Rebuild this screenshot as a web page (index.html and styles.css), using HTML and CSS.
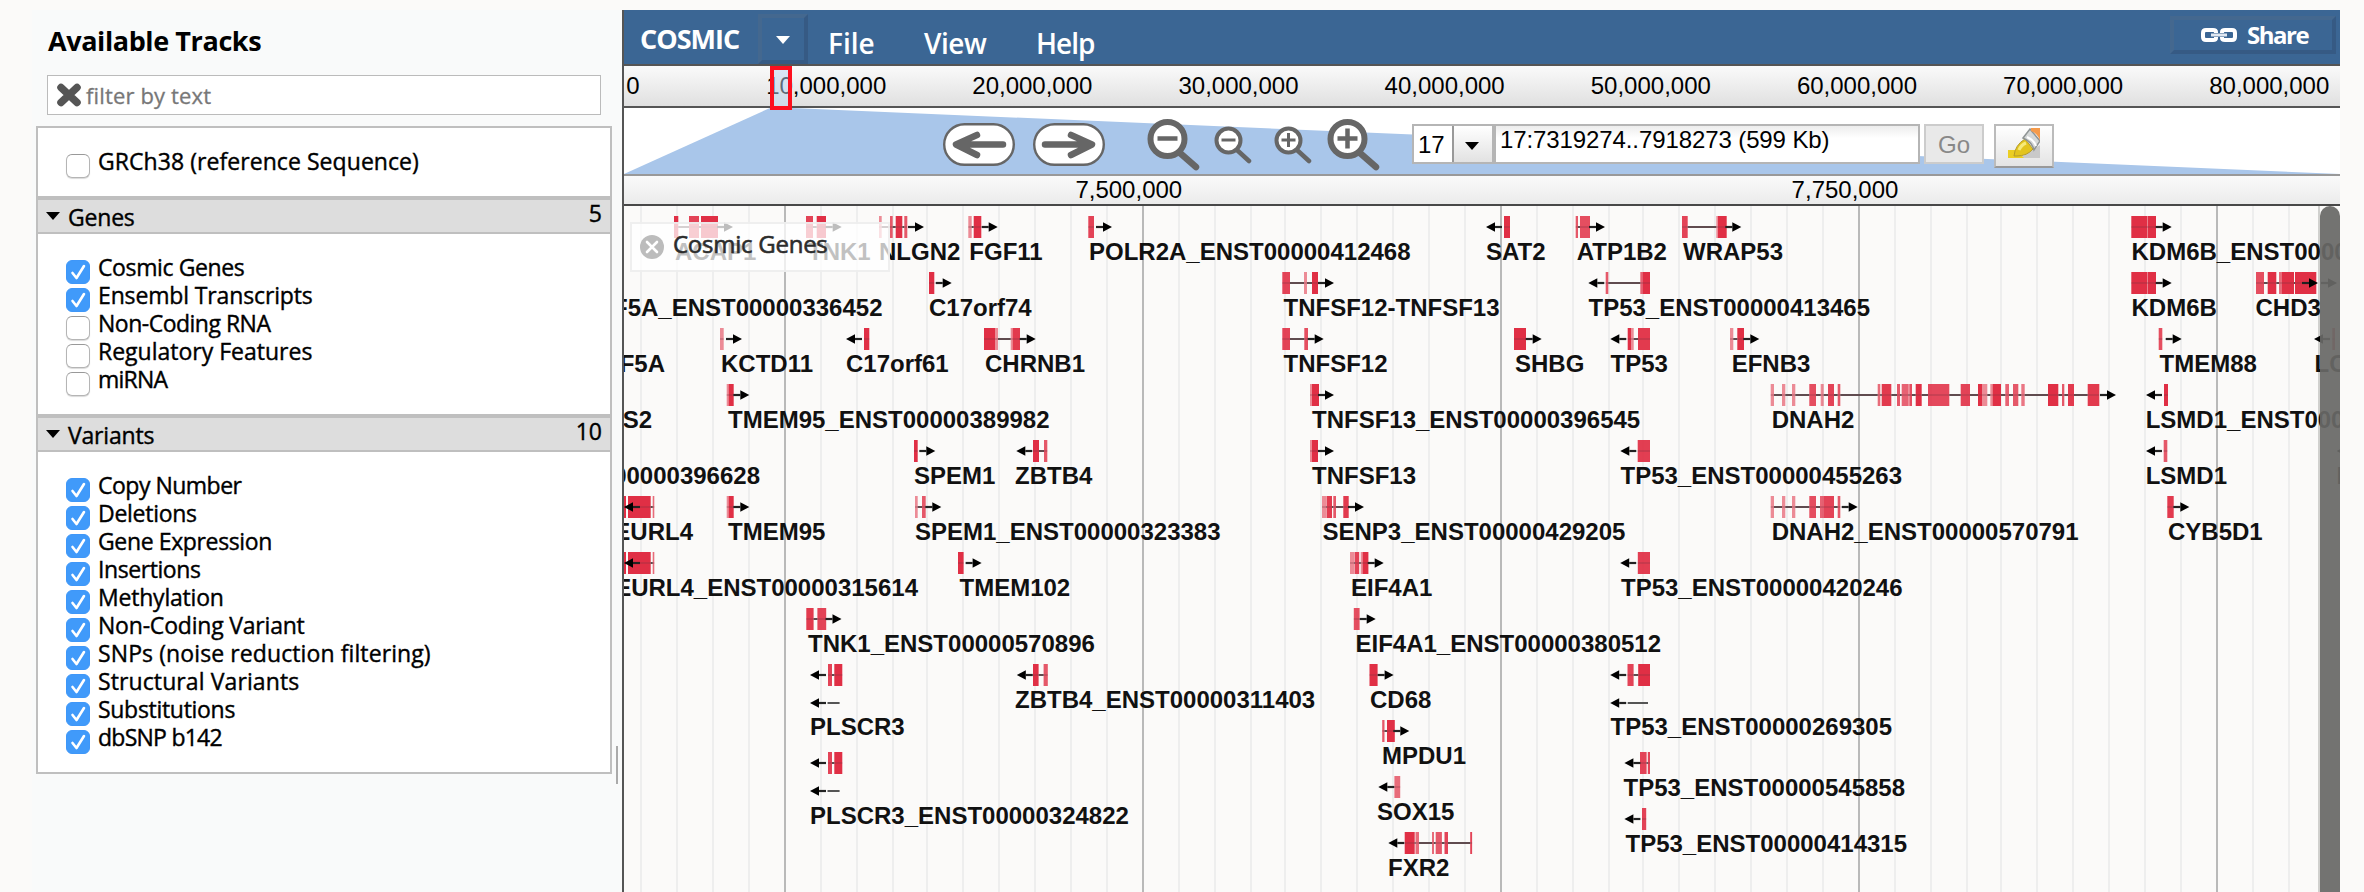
FILE: index.html
```html
<!DOCTYPE html>
<html lang="en">
<head>
<meta charset="utf-8">
<title>COSMIC Genome Browser</title>
<link rel="stylesheet" href="styles.css">
</head>
<body>
<div class="app">
  <aside class="sidebar">
    <h1 class="sidebar-title"><span>Available Tracks</span></h1>
    <div class="filter">
      <svg class="filter-clear" width="26" height="24" viewBox="0 0 26 24"><path d="M5 4.500L21 19.500M21 4.500L5 19.500" stroke="#555" stroke-width="7.500" stroke-linecap="round"/></svg>
      <span class="filter-hint">filter by text</span>
    </div>
    <div class="groups" id="groups"></div>
  </aside>
  <div class="splitter"><i class="grip"></i></div>
  <main class="browser">
    <nav class="menubar">
      <span class="brand">COSMIC</span>
      <span class="brand-drop"><i class="tri tri-light"></i></span>
      <span class="menu menu-file">File</span>
      <span class="menu menu-view">View</span>
      <span class="menu menu-help">Help</span>
      <span class="share">
        <svg width="38" height="16" viewBox="0 0 38 16"><g fill="none" stroke="#fff" stroke-width="4"><path d="M16 6V5Q16 3 13 3H6Q3 3 3 6V10Q3 13 6 13H13Q16 13 16 11V10"/><path d="M22 6V5Q22 3 25 3H32Q35 3 35 6V10Q35 13 32 13H25Q22 13 22 11V10"/></g><path d="M11 8H27" stroke="#dfe7f1" stroke-width="3"/></svg>
        <span class="share-text">Share</span>
      </span>
    </nav>
    <svg class="overview" id="overview" width="1716" height="40" viewBox="624 66 1716 40"></svg>
    <div class="navbox">
      <svg class="navshade" width="1716" height="66" viewBox="624 108 1716 66"><path d="M624 174L770 108H792L2340 174Z" fill="#a9c6ea"/></svg>
      <svg class="pan pan-left" width="72" height="43" viewBox="0 0 72 43"><rect x="1.200" y="1.200" width="69.600" height="40.600" rx="20.300" fill="#fff" stroke="#666" stroke-width="2.400"/><path d="M60 21.500H14M34 12L13 21.500L34 32" fill="none" stroke="#666" stroke-width="6.500" stroke-linecap="round" stroke-linejoin="round"/></svg>
      <svg class="pan pan-right" width="72" height="43" viewBox="0 0 72 43"><rect x="1.200" y="1.200" width="69.600" height="40.600" rx="20.300" fill="#fff" stroke="#666" stroke-width="2.400"/><path d="M12 21.500H58M38 12L59 21.500L38 32" fill="none" stroke="#666" stroke-width="6.500" stroke-linecap="round" stroke-linejoin="round"/></svg>
      <svg class="zoom-out-big" width="54" height="52" viewBox="0 0 54 52"><path d="M33 34L49 48" stroke="#666" stroke-width="6.500" stroke-linecap="round"/><circle cx="20.500" cy="20" r="17" fill="#fff" stroke="#666" stroke-width="6"/><path d="M10.500 19.500H30.500" stroke="#666" stroke-width="4.500"/></svg>
      <svg class="zoom-out" width="38" height="38" viewBox="0 0 38 38"><path d="M23 24L35 35" stroke="#666" stroke-width="4.500" stroke-linecap="round"/><circle cx="14.500" cy="14.500" r="12" fill="#fff" stroke="#666" stroke-width="4"/><path d="M7.500 14H21.500" stroke="#666" stroke-width="3"/></svg>
      <svg class="zoom-in" width="38" height="38" viewBox="0 0 38 38"><path d="M23 24L35 35" stroke="#666" stroke-width="4.500" stroke-linecap="round"/><circle cx="14.500" cy="14.500" r="12" fill="#fff" stroke="#666" stroke-width="4"/><path d="M7.500 14H21.500M14.500 7V21" stroke="#666" stroke-width="3"/></svg>
      <svg class="zoom-in-big" width="54" height="52" viewBox="0 0 54 52"><path d="M33 34L49 48" stroke="#666" stroke-width="6.500" stroke-linecap="round"/><circle cx="20.500" cy="20" r="17" fill="#fff" stroke="#666" stroke-width="6"/><path d="M10.500 19.500H30.500M20.500 9.500V29.500" stroke="#666" stroke-width="4.500"/></svg>
      <div class="chrom"><span class="chrom-value">17</span><span class="chrom-drop"><i class="tri"></i></span></div>
      <div class="location">17:7319274..7918273 (599 Kb)</div>
      <div class="go">Go</div>
      <div class="highlight">
        <svg width="32" height="30" viewBox="0 0 32 30">
          <path d="M12 30L32 17V30Z" fill="#c9c9c9"/>
          <path d="M0 22H8L16 30H0Z" fill="#ebce22"/>
          <path d="M6 28Q7 17 17 11L25 21Q19 28 9 28Z" fill="#e3c41d" stroke="#b39a28" stroke-width="1"/>
          <path d="M11 22Q13 17 18 15" stroke="#f7ea7a" stroke-width="3" fill="none"/>
          <path d="M15 10L22 1L32 13L26 22Q24 14 15 10Z" fill="#d5d8d8" stroke="#8f9494" stroke-width="1.500"/>
          <path d="M19 9Q26 12 28 18" stroke="#fff" stroke-width="2" fill="none"/>
          <path d="M23 0H32V12Q29 5 23 3Z" fill="#f59a4a"/>
        </svg>
      </div>
    </div>
    <svg class="ruler" id="ruler" width="1716" height="28" viewBox="624 176 1716 28"></svg>
    <div class="viewport">
      <svg class="tracks" id="tracks" width="1716" height="686" viewBox="624 206 1716 686"></svg>
      <div class="track-label">
        <svg width="24" height="24" viewBox="0 0 24 24"><circle cx="12" cy="12" r="12" fill="#bcbcbc"/><path d="M7 7L17 17M17 7L7 17" stroke="#fff" stroke-width="2.600" stroke-linecap="round"/></svg>
        <span class="track-label-text">Cosmic Genes</span>
      </div>
      <div class="scrollbar"></div>
    </div>
    <svg class="marker" width="22" height="44" viewBox="0 0 22 44"><rect x="2" y="2" width="18" height="40" fill="#bcd5f0" fill-opacity=".5" stroke="#fd0f1e" stroke-width="4"/></svg>
  </main>
</div>
<script src="app.js"></script>
</body>
</html>
```
FILE: styles.css
```css
* { box-sizing: border-box; }
body { margin: 0; width: 2364px; height: 892px; overflow: hidden; background: #fbfaf9; color: #000; font-family: "Open Sans", "Noto Sans", sans-serif; }
svg { display: block; flex: none; }
.app { display: flex; height: 892px; padding: 10px 24px 0 32px; }

.sidebar { width: 580px; padding: 13px 0 0 4px; background: #f9fafa; }
.sidebar-title { margin: 0 0 16px 12px; font-size: 27px; line-height: 36px; font-weight: 700; letter-spacing: -0.4px; }
.filter { display: flex; align-items: center; width: 554px; height: 40px; margin-left: 11px; padding-left: 8px; border: 1px solid #bbb; background: #fff; }
.filter-hint { margin-left: 4px; color: #777; font-size: 22px; line-height: 38px; letter-spacing: 0.15px; -webkit-text-stroke: 0.3px #777; }
.groups { width: 576px; margin-top: 11px; -webkit-text-stroke: 0.4px #000; }
.group { border: 2px solid #bfbfbf; background: #fff; }
.group-head { display: flex; height: 34px; padding: 1px 8px 0 8px; border-bottom: 2px solid #bfbfbf; background: #ddd; font-size: 23px; line-height: 32px; }
.group-head .tri { margin: 11px 8px 0 0; }
.group-name { flex: 1; letter-spacing: -0.2px; }
.group-count { line-height: 24px; }
.group-body { padding: 19px 0 21px 28px; }
.row { display: flex; height: 28px; font-size: 23px; line-height: 28px; }
.check { width: 24px; height: 24px; margin: 7px 8px 0 0; border: 1px solid #b5b5b5; border-top-color: #999; border-radius: 6px; background: #fff; box-shadow: 0 1px 1px rgba(0,0,0,.15); }
.check-on { border-color: #3f97f8; background: #409afa; box-shadow: none; }
.check-on svg { margin: -1px; }
.tri { display: block; width: 0; height: 0; border: 7px solid transparent; border-top: 8px solid #000; border-bottom: 0; }
.tri-light { border-top-color: #fff; }

.splitter { display: flex; flex-direction: column; width: 10px; padding: 736px 0 0 4px; background: #f9fafa; }
.grip { width: 2px; height: 38px; background: #aaa; }

.browser { position: relative; width: 1718px; border-left: 2px solid #555; }
.menubar { display: flex; height: 56px; border-bottom: 2px solid #555; background: #3b6694; color: #fff; line-height: 54px; }
.brand { width: 118px; margin-left: 16px; padding-top: 2px; font-size: 27px; font-weight: 700; letter-spacing: -1px; }
.brand-drop { width: 50px; height: 50px; margin: 4px 20px 0 0; padding: 18px 0 0 14px; border: 4px solid; border-color: #44688f #365a84 #365a84 #44688f; }
.menu { padding-top: 6px; font-size: 28px; font-weight: 600; letter-spacing: -1px; }
.menu-file { width: 96px; letter-spacing: 0; }
.menu-view { width: 112px; letter-spacing: -0.5px; }
.share { display: flex; align-items: center; width: 166px; height: 38px; margin: 6px 4px 0 auto; padding-left: 26px; border: 4px solid; border-color: #44688f #365a84 #365a84 #44688f; }
.share-text { margin-left: 9px; font-size: 24px; font-weight: 700; line-height: 30px; letter-spacing: -1.5px; }
.overview { height: 40px; background: linear-gradient(#fafafa, #e0e0e0); }
.marker { position: absolute; left: 146px; top: 56px; }
.axis { font-family: "Liberation Sans", Arial, sans-serif; font-size: 24px; }

.navbox { position: relative; display: flex; height: 70px; border-top: 2px solid #555; border-bottom: 2px solid #999; background: #fff; font-family: "Liberation Sans", Arial, sans-serif; font-size: 24px; }
.navshade { position: absolute; left: 0; top: 0; }
.navbox > * { z-index: 1; }
.navbox > .navshade { z-index: 0; }
.pan { margin-top: 15px; }
.pan-left { margin-left: 319px; }
.pan-right { margin-left: 18px; }
.zoom-out-big { margin: 11px 0 0 42px; }
.zoom-out { margin: 18px 0 0 13px; }
.zoom-in { margin: 18px 0 0 22px; }
.zoom-in-big { margin: 11px 0 0 15px; }
.chrom { display: flex; width: 82px; height: 40px; margin: 16px 0 0 31px; border: 2px solid #b5b5b5; background: #fff; }
.chrom-value { width: 38px; padding-left: 4px; line-height: 38px; }
.chrom-drop { flex: 1; padding: 16px 0 0 11px; border-left: 2px solid #999; background: linear-gradient(#fff, #e2e2e2); }
.location { width: 426px; height: 40px; margin-top: 16px; padding-left: 4px; border: 2px solid #b5b5b5; background: linear-gradient(#ededed, #fff 12px); line-height: 28px; letter-spacing: -0.1px; white-space: nowrap; }
.go { width: 60px; height: 40px; margin: 16px 0 0 4px; border: 2px solid #ccc; background: #e9e9e9; color: #888; line-height: 38px; text-align: center; }
.highlight { width: 60px; height: 44px; margin: 16px 0 0 10px; padding: 2px 0 0 12px; border: 2px solid #bbb; border-bottom-color: #999; background: linear-gradient(#fff, #e4e4e4); }

.ruler { background: linear-gradient(#fafafa, #ebebeb); }
.viewport { position: relative; height: 688px; border-top: 2px solid #484848; }
.gene { font-family: "Liberation Sans", Arial, sans-serif; font-size: 24px; font-weight: 700; fill: #111; }
.track-label { position: absolute; left: 6px; top: 16px; display: flex; align-items: center; width: 260px; height: 50px; padding-left: 8px; border: 2px solid rgba(235,235,235,.8); background: rgba(255,255,255,.74); }
.track-label-text { margin: -6px 0 0 9px; color: #2c2c2c; font-size: 24px; line-height: 30px; letter-spacing: -0.25px; -webkit-text-stroke: 0.6px #2c2c2c; }
.scrollbar { position: absolute; right: 0; top: 0; width: 20px; height: 686px; border-radius: 10px 10px 0 0; background: rgba(104,104,102,.93); }
```
FILE: app.js
```js
// Track groups: label, checked state, tracking in px
const groups = [
  { items: [['GRCh38 (reference Sequence)', 0, 0.06]] },
  { name: 'Genes', count: 5, items: [['Cosmic Genes', 1, -0.38], ['Ensembl Transcripts', 1, -0.14], ['Non-Coding RNA', 0, -0.5], ['Regulatory Features', 0, 0], ['miRNA', 0, -0.8]] },
  { name: 'Variants', count: 10, items: [['Copy Number', 1, -0.5], ['Deletions', 1, -0.27], ['Gene Expression', 1, -0.37], ['Insertions', 1, -0.42], ['Methylation', 1, -0.2], ['Non-Coding Variant', 1, -0.2], ['SNPs (noise reduction filtering)', 1, 0.1], ['Structural Variants', 1, 0.1], ['Substitutions', 1, -0.3], ['dbSNP b142', 1, -0.75]] }
];
const tick = '<svg width="24" height="24" viewBox="0 0 24 24"><path d="M6.500 13L10.500 18L18 6" fill="none" stroke="#fff" stroke-width="2.600" stroke-linecap="round" stroke-linejoin="round"/></svg>';
document.getElementById('groups').innerHTML = groups.map(g =>
  '<section class="group">' +
  (g.name ? `<header class="group-head"><i class="tri"></i><span class="group-name">${g.name}</span><span class="group-count">${g.count}</span></header>` : '') +
  '<div class="group-body">' + g.items.map(([t, on, ls]) =>
    `<div class="row"><span class="check${on ? ' check-on' : ''}">${on ? tick : ''}</span><span class="row-text" style="letter-spacing:${ls}px">${t}</span></div>`).join('') +
  '</div></section>').join('');

// Chromosome overview scale
let out = '<text class="axis" x="633" y="94" text-anchor="middle">0</text>';
for (let i = 1; i <= 8; i++) out += `<text class="axis" x="${826.2 + (i - 1) * 206.15}" y="94" text-anchor="middle">${i}0,000,000</text>`;
document.getElementById('overview').innerHTML = out;
document.getElementById('ruler').innerHTML =
  '<text class="axis" x="1128.800" y="198" text-anchor="middle">7,500,000</text><text class="axis" x="1845" y="198" text-anchor="middle">7,750,000</text>';

// Each gene: name, row, label x (negative = right edge), direction, arrow tip x, exons [start, end, opacity]
const P = 0.55;
const dnahHead = [[1770.7,1774,P],[1782,1785.3,P],[1792,1795.3,P],[1809.3,1816,.85]];
const neurl = [[624,626],[628,650.7],[652.7,654.3,.7]];
const kdm = [[2131.3,2147.3],[2147.3,2148,.6],[2148,2156]];
const genes = [
  ['ACAP1',0,675,1,733,[[674,678.3],[689,699,.9],[701,718]]],
  ['TNK1',0,808,1,841.7,[[806,813,.9],[816.7,826]]],
  ['NLGN2',0,879,1,924,[[879,881.7,P],[890,892.7,.8],[895.7,902.3],[904.3,907.3,.8]]],
  ['FGF11',0,969.3,1,997.7,[[968.3,971.7,P],[973.7,981.3]]],
  ['POLR2A_ENST00000412468',0,1089,1,1112,[[1088.3,1094,.9]]],
  ['SAT2',0,1486,-1,1486,[[1504,1510]]],
  ['ATP1B2',0,1576.7,1,1605,[[1575.7,1578,.8],[1580,1590,.85]]],
  ['WRAP53',0,1683,1,1741.3,[[1682,1687.7,.9],[1716.3,1718,P],[1718,1726.7]]],
  ['KDM6B_ENST00000254846',0,2131.5,1,2171.7,kdm],
  ['EIF5A_ENST00000336452',1,-882.5,0,0,[]],
  ['C17orf74',1,929,1,951.7,[[929,934.3]]],
  ['TNFSF12-TNFSF13',1,1283.5,1,1334,[[1282.3,1290,.9],[1304,1307,P],[1312,1318]]],
  ['TP53_ENST00000413465',1,1588.5,-1,1588.3,[[1605.7,1608.3,.8],[1640.3,1643,.75],[1643,1650]]],
  ['KDM6B',1,2131.5,1,2171.7,kdm],
  ['CHD3',1,2255.5,1,2318,[[2256,2264,.85],[2267.7,2276.3],[2279,2282,.7],[2282,2294],[2295,2316.3]]],
  ['EIF5A',2,-665,0,0,[]],
  ['KCTD11',2,721,1,742,[[720,723.7,P]]],
  ['C17orf61',2,846,-1,846,[[864,869.3]]],
  ['CHRNB1',2,985,1,1035.7,[[984,995],[995,998,P],[1010.7,1012.5,P],[1012.5,1020,.95]]],
  ['TNFSF12',2,1283.5,1,1323.7,[[1282.3,1290,.9],[1304.3,1308,.85]]],
  ['SHBG',2,1515,1,1541.7,[[1514,1526]]],
  ['TP53',2,1610.5,-1,1610.3,[[1627.7,1631],[1631,1633.7,P],[1638,1650,.95]]],
  ['EFNB3',2,1731.7,1,1759.3,[[1730,1733.3,P],[1737.3,1744]]],
  ['TMEM88',2,2159.5,1,2181.7,[[2158.7,2162.3,.85]]],
  ['LCE',2,2314.6,-1,2314,[[2332.3,2335,.8]]],
  ['SLC2A4_S2',3,-652,0,0,[]],
  ['TMEM95_ENST00000389982',3,728,1,749.3,[[726.7,728.5,P],[728.5,733.7]]],
  ['TNFSF13_ENST00000396545',3,1312,1,1334,[[1310,1312,P],[1312,1319]]],
  ['DNAH2',3,1771.7,1,2116,[...dnahHead,[1820.7,1823.7,P],[1828,1834,.9],[1837.7,1840.3,.8],[1877.7,1880.3,.7],[1881.7,1891.3,.95],[1897,1900,.8],[1901.7,1908.7,.75],[1909.3,1912,.85],[1915.7,1921.7],[1928,1949.3,.88],[1960.7,1970,.9],[1978,1982],[1982,1987.3,P],[1990.3,1992.5,P],[1992.5,2001],[2005.3,2009,.75],[2013,2018.3,.8],[2021.3,2024.7,.65],[2048,2058.3],[2062,2064.3,.8],[2068,2074,.95],[2087.7,2099.3,.95]]],
  ['LSMD1_ENST00000330767',3,2145.7,-1,2146,[[2164,2168]]],
  ['EIF5A_ENST00000396628',4,-760,0,0,[]],
  ['SPEM1',4,914,1,935.3,[[914,917.7]]],
  ['ZBTB4',4,1015,-1,1016.3,[[1033,1039],[1044,1047.3,.8]]],
  ['TNFSF13',4,1312,1,1334,[[1310,1312,P],[1312,1318]]],
  ['TP53_ENST00000455263',4,1620.5,-1,1620.3,[[1637.7,1650,.93]]],
  ['LSMD1',4,2145.7,-1,2146,[[2163.7,2167.3,.8]]],
  ['D',4,2336.5,-1,2336.7,[]],
  ['NEURL4',5,-693,-1,624,neurl],
  ['TMEM95',5,728,1,749.3,[[726.7,728.5,P],[728.5,733.7]]],
  ['SPEM1_ENST00000323383',5,915,1,941.3,[[915,917.7,P],[922,925.7,.8]]],
  ['SENP3_ENST00000429205',5,1322.5,1,1364,[[1322,1326,P],[1326.5,1332,.95],[1333.3,1336,.8],[1343.3,1348.7,.95]]],
  ['DNAH2_ENST00000570791',5,1771.7,1,1857.7,[...dnahHead,[1820,1824,.75],[1824,1834,.9],[1837.7,1840.3,.8]]],
  ['CYB5D1',5,2168,1,2189.3,[[2167.3,2173.7,.95]]],
  ['NEURL4_ENST00000315614',6,-918,-1,624,neurl],
  ['TMEM102',6,959.5,1,981.6,[[958,963.6]]],
  ['EIF4A1',6,1351,1,1383.7,[[1350,1354,P],[1354.5,1359.2,.9],[1360.7,1362.5,P],[1362.5,1368.4]]],
  ['TP53_ENST00000420246',6,1621,-1,1620.2,[[1637.8,1650,.93]]],
  ['TNK1_ENST00000570896',7,808,1,841.5,[[806.3,813.6,.95],[817.4,826.2,.9]]],
  ['EIF4A1_ENST00000380512',7,1355.5,1,1375.7,[[1353.8,1359.6,.85]]],
  ['PLSCR3',8,810,-1,810,[[828,832,.9],[834.3,842.3]],735,839.6],
  ['PLSCR3_ENST00000324822',9.5714,810,-1,810,[[828,832,.9],[834.3,842.3]],823.5,839.6],
  ['ZBTB4_ENST00000311403',8,1015,-1,1016.8,[[1033,1038.6],[1043.6,1047.8,.8]]],
  ['CD68',8,1370,1,1393.6,[[1369.5,1377.6]]],
  ['MPDU1',9,1382,1,1409.3,[[1382.2,1384.5,.8],[1387,1394.8]]],
  ['SOX15',10,1377,-1,1378.3,[[1394.4,1400.2,.7]]],
  ['FXR2',11,1388,-1,1388.3,[[1404.7,1414.7],[1415.5,1419,.7],[1432,1434,.7],[1435.7,1441.9,.8],[1444.5,1448,.9],[1470.2,1472.1,.9]]],
  ['TP53_ENST00000269305',8,1610.5,-1,1610.2,[[1627.5,1633.6,.9],[1638.2,1650]],735,1648],
  ['TP53_ENST00000545858',9.5714,1623.5,-1,1624.4,[[1640,1646.6,.9],[1647.8,1650,.9]]],
  ['TP53_ENST00000414315',10.5714,1625.5,-1,1624.4,[[1642,1646.2,.9]]]
];

function arrow(tip, dir, y) {
  const b = tip - dir * 9;
  return `<path d="M${tip - dir * 16} ${y}H${b}" stroke="#222" stroke-width="2.200"/><path d="M${tip} ${y}L${b} ${y - 4.8}V${y + 4.8}Z" fill="#000"/>`;
}

let svg = '';
for (let m = 427; m < 2320; m += 358)
  [0, 36, 72, 108, 142, 178, 214, 250, 286, 322].forEach((o, i) => {
    const x = m + o;
    if (x > 624 && x < 2320) svg += `<path d="M${x} 206V892" stroke="${i ? '#eee' : '#b9b9b9'}" stroke-width="2"/>`;
  });
svg += '<path d="M2319 206V892" stroke="#d0d0ce" stroke-width="2"/>';
for (const [name, row, tx, dir, tip, exons, ly, second] of genes) {
  const y = Math.round(216 + row * 56), mid = y + 11;
  for (const [a, b, o] of exons)
    svg += `<rect x="${a}" y="${y}" width="${b - a}" height="22" fill="#e02f45" fill-opacity="${o || 1}"/>`;
  if (exons.length) {
    const a = exons[0][0], b = exons[exons.length - 1][1];
    let prev = a;
    for (const [s, e] of exons) {
      if (s > prev) svg += `<path d="M${prev} ${mid}H${s}" stroke="#555" stroke-width="2"/>`;
      prev = e;
    }
    svg += `<path d="M${a} ${mid}H${b}" stroke="#803040" stroke-width="1.500" opacity=".35"/>`;
  }
  if (dir) svg += arrow(tip, dir, mid);
  if (second) svg += arrow(tip, dir, mid + 28) + `<path d="M${tip + 17.5} ${mid + 28}H${second}" stroke="#555" stroke-width="2"/>`;
  svg += `<text class="gene" x="${Math.abs(tx)}" y="${ly || y + 44}"${tx < 0 ? ' text-anchor="end"' : ''}>${name}</text>`;
}
svg += arrow(2337, 1, 283);
document.getElementById('tracks').innerHTML = svg;
```
